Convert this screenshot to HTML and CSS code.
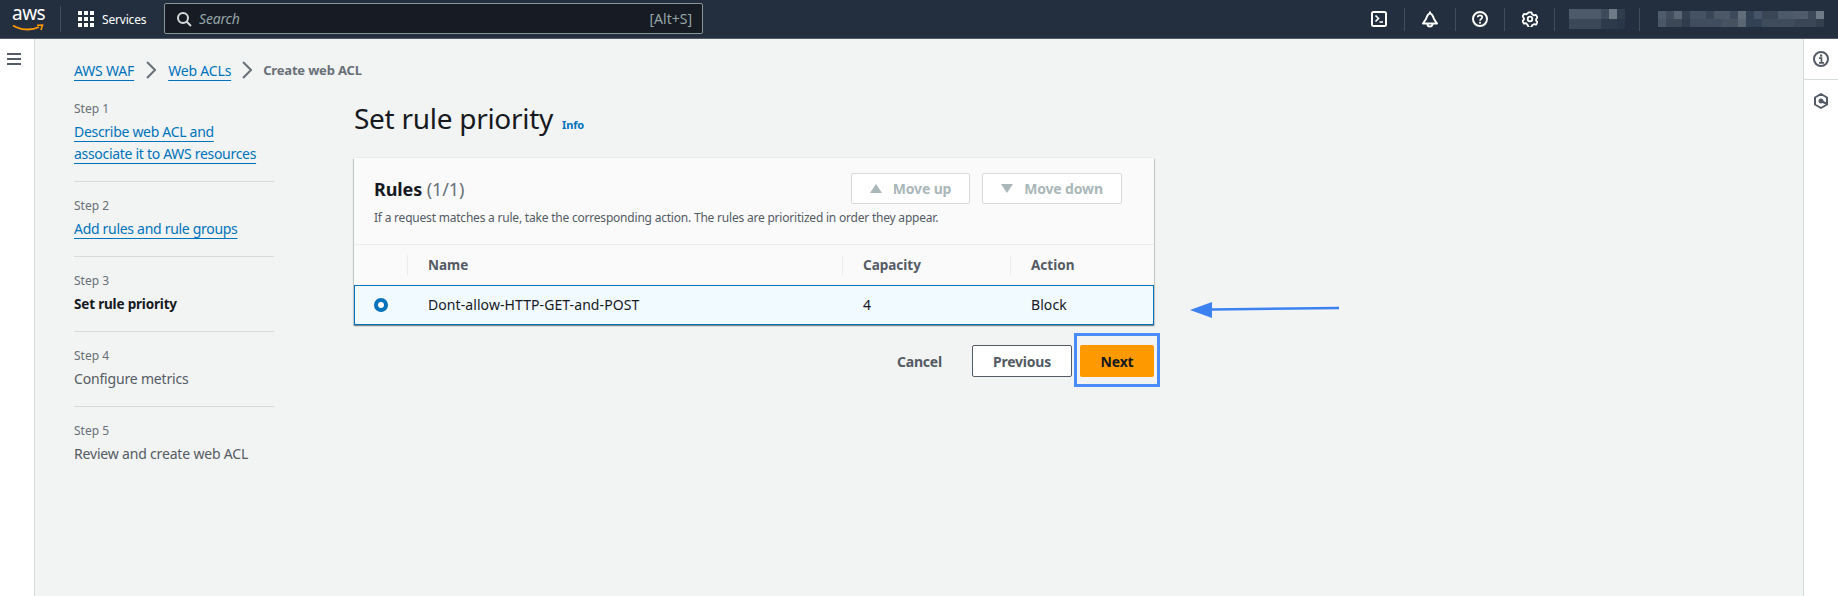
FILE: index.html
```html
<!DOCTYPE html>
<html lang="en">
<head>
    <meta charset="UTF-8">
    <meta name="viewport" content="width=device-width, initial-scale=1.0">
    <title>Set rule priority</title>
    <link rel="stylesheet" href="styles.css">
</head>
<body>
    <!-- Top bar -->
    <header class="topbar">
        <div class="logo">
            <span class="logo-text">aws</span>
            <svg class="logo-smile" viewBox="0 0 32 8" width="32" height="8"><path d="M1 1.500C8 6 19 7 27 3" fill="none" stroke="#f90" stroke-width="1.800"/><path d="M25 1.200L30.500 1 29 6" fill="none" stroke="#f90" stroke-width="1.600"/></svg>
        </div>
        <div class="services">
            <span class="grid-icon"><i></i><i></i><i></i><i></i><i></i><i></i><i></i><i></i><i></i></span>
            <span>Services</span>
        </div>
        <div class="search">
            <svg viewBox="0 0 16 16" width="16" height="16"><circle cx="7" cy="7" r="5" fill="none" stroke="#d5dbdb" stroke-width="2"/><path d="M10.500 10.500L15 15" stroke="#d5dbdb" stroke-width="2"/></svg>
            <span class="search-text">Search</span>
            <span class="search-key">[Alt+S]</span>
        </div>
        <div class="top-icons">
            <span class="top-icon">
                <svg viewBox="0 0 16 16" width="16" height="16"><rect x="1" y="1" width="14" height="14" rx="1.500" fill="none" stroke="#fff" stroke-width="2"/><path d="M4.500 4.500L7.500 7.500 4.500 10.500M8.500 11H12" fill="none" stroke="#fff" stroke-width="1.700"/></svg>
            </span>
            <span class="top-icon">
                <svg viewBox="0 0 16 17" width="16" height="17"><path d="M1 12.500h14L12 8C11 5 10 2.500 8 2.500S5 5 4 8z" fill="none" stroke="#fff" stroke-width="2" stroke-linejoin="round"/><path d="M8 .5v2" stroke="#fff" stroke-width="2"/><path d="M5.500 13a2.500 2.500 0 0 0 5 0" fill="none" stroke="#fff" stroke-width="2"/></svg>
            </span>
            <span class="top-icon">
                <svg viewBox="0 0 16 16" width="16" height="16"><circle cx="8" cy="8" r="7" fill="none" stroke="#fff" stroke-width="2"/><path d="M5.800 6.300C5.800 5 6.800 4.300 8 4.300s2.200 .8 2.200 2C10.200 8 8 8 8 9.800" fill="none" stroke="#fff" stroke-width="1.700"/><rect x="7.100" y="10.800" width="1.800" height="1.800" fill="#fff"/></svg>
            </span>
            <span class="top-icon">
                <svg viewBox="0 0 16 16" width="16" height="16"><path d="M6.500 1h3l.6 2 1.900 1.100 2-.5 1.500 2.600-1.400 1.500v1.600l1.400 1.500-1.500 2.600-2-.5-1.900 1.100-.6 2h-3l-.6-2L4 11.900l-2 .5L.5 9.800l1.400-1.500V6.700L.5 5.200 2 2.600l2 .5 1.900-1.100z" transform="translate(0 .300)" fill="none" stroke="#fff" stroke-width="1.800" stroke-linejoin="round"/><circle cx="8" cy="8" r="2.300" fill="none" stroke="#fff" stroke-width="1.800"/></svg>
            </span>
            <span class="top-icon blur-cell"><span class="mosaic mosaic-short"></span></span>
            <span class="top-icon blur-cell"><span class="mosaic mosaic-long"></span></span>
        </div>
    </header>

    <div class="layout">
        <!-- Left nav -->
        <nav class="side-nav">
            <span class="burger"><i></i><i></i><i></i></span>
        </nav>

        <!-- Content -->
        <main class="content">
            <div class="breadcrumb">
                <a class="link">AWS WAF</a>
                <svg class="crumb-arrow" viewBox="0 0 10 18" width="10" height="18"><path d="M1 1l8 8-8 8" fill="none" stroke="#687078" stroke-width="2"/></svg>
                <a class="link">Web ACLs</a>
                <svg class="crumb-arrow crumb-arrow-last" viewBox="0 0 10 18" width="10" height="18"><path d="M1 1l8 8-8 8" fill="none" stroke="#687078" stroke-width="2"/></svg>
                <span class="crumb-current">Create web ACL</span>
            </div>

            <div class="wizard">
                <ol class="steps">
                    <li class="step">
                        <div class="step-label">Step 1</div>
                        <a class="link step-link">Describe web ACL and<br>associate it to AWS resources</a>
                    </li>
                    <li class="step">
                        <div class="step-label">Step 2</div>
                        <a class="link step-link">Add rules and rule groups</a>
                    </li>
                    <li class="step">
                        <div class="step-label">Step 3</div>
                        <strong class="step-active">Set rule priority</strong>
                    </li>
                    <li class="step">
                        <div class="step-label">Step 4</div>
                        <span class="step-off">Configure metrics</span>
                    </li>
                    <li class="step">
                        <div class="step-label">Step 5</div>
                        <span class="step-off">Review and create web ACL</span>
                    </li>
                </ol>

                <section class="main-col">
                    <div class="title-row">
                        <h1>Set rule priority</h1>
                        <a class="info">Info</a>
                    </div>

                    <div class="card">
                        <div class="card-head">
                            <div class="card-title-row">
                                <h2>Rules <span class="count">(1/1)</span></h2>
                                <div class="move-btns">
                                    <span class="btn-off btn-up"><i class="tri-up"></i>Move up</span>
                                    <span class="btn-off btn-down"><i class="tri-down"></i>Move down</span>
                                </div>
                            </div>
                            <p class="card-desc">If a request matches a rule, take the corresponding action. The rules are prioritized in order they appear.</p>
                        </div>
                        <div class="row row-head">
                            <div></div>
                            <div class="th">Name</div>
                            <div class="th">Capacity</div>
                            <div class="th">Action</div>
                        </div>
                        <div class="row row-selected">
                            <div class="radio-cell"><span class="radio"></span></div>
                            <div class="td">Dont-allow-HTTP-GET-and-POST</div>
                            <div class="td">4</div>
                            <div class="td">Block</div>
                        </div>
                    </div>

                    <div class="actions">
                        <span class="btn-cancel">Cancel</span>
                        <span class="btn-prev">Previous</span>
                        <span class="btn-next">Next<span class="highlight"></span></span>
                    </div>
                </section>
            </div>
        </main>

        <!-- Right rail -->
        <aside class="rail">
            <div class="rail-item">
                <svg viewBox="0 0 16 16" width="16" height="16"><circle cx="8" cy="8" r="7" fill="none" stroke="#545b64" stroke-width="2"/><rect x="7" y="3.500" width="2.200" height="2.200" fill="#545b64"/><path d="M6 7.200h2.500v4.300M6 11.800h5" fill="none" stroke="#545b64" stroke-width="1.700"/></svg>
            </div>
            <div class="rail-item">
                <svg viewBox="0 0 16 16" width="16" height="16"><path d="M8 1l6 3.500v7L8 15l-6-3.500v-7z" fill="none" stroke="#545b64" stroke-width="2" stroke-linejoin="round"/><circle cx="8" cy="8" r="2.500" fill="#545b64"/><path d="M8 8l6 3" stroke="#545b64" stroke-width="2"/></svg>
            </div>
        </aside>
    </div>

    <!-- Annotation arrow -->
    <svg class="note-arrow" viewBox="0 0 152 20" width="152" height="20"><path d="M22 10.500L150 9" stroke="#3b82f0" stroke-width="2.500"/><path d="M1 11L23 3v16z" fill="#3b82f0"/></svg>
</body>
</html>
```

FILE: styles.css
```css
* {
    box-sizing: border-box;
}
html, body {
    margin: 0;
    height: 100%;
    overflow: hidden;
}
body {
    font-family: "Noto Sans", "Open Sans", sans-serif;
    font-size: 14px;
    letter-spacing: -0.18px;
    color: #16191f;
    background: #fff;
    display: flex;
    flex-direction: column;
}

/* Top bar */
.topbar {
    height: 39px;
    flex: none;
    background: #232f3e;
    border-bottom: 1px solid #545b64;
    display: flex;
    align-items: center;
    color: #fff;
}
.logo {
    width: 61px;
    height: 26px;
    padding-left: 12px;
    border-right: 1px solid #414d5c;
    position: relative;
}
.logo-text {
    display: block;
    font-size: 19px;
    line-height: 19px;
    letter-spacing: -0.5px;
    margin-top: -2px;
}
.logo-smile {
    position: absolute;
    left: 12px;
    top: 18px;
}
.services {
    display: flex;
    align-items: center;
    gap: 8px;
    padding-left: 17px;
    width: 103px;
    font-size: 12px;
}
.grid-icon {
    display: grid;
    grid-template-columns: repeat(3, 4px);
    gap: 2px;
}
.grid-icon i {
    width: 4px;
    height: 4px;
    background: #fff;
}
.search {
    width: 539px;
    height: 31px;
    margin-top: -1px;
    background: #161b24;
    border: 1px solid #879596;
    border-radius: 2px;
    display: flex;
    align-items: center;
    padding: 0 10px 0 11px;
    color: #95a5a6;
    font-size: 14px;
}
.search-text {
    font-style: italic;
    margin-left: 7px;
    flex: 1;
}
.search-key {
    letter-spacing: 0;
}
.top-icons {
    margin-left: auto;
    display: flex;
    align-items: center;
    padding-right: 14px;
}
.top-icon {
    width: 50px;
    height: 23px;
    display: flex;
    align-items: center;
    justify-content: center;
    border-right: 1px solid #414d5c;
}
.top-icon:nth-child(1) {
    width: 51px;
    border-right-color: #414d5c;
}
.top-icon:nth-child(2) {
    width: 51px;
}
.top-icon:nth-child(3) {
    width: 49px;
}
.top-icon.blur-cell:nth-child(5) {
    width: 85px;
}
.top-icon.blur-cell:last-child {
    width: auto;
    border-right: 0;
    padding-left: 18px;
}
.mosaic {
    display: block;
    background-repeat: no-repeat;
}
.mosaic-short {
    width: 56px;
    height: 20px;
    background:
        linear-gradient(90deg, #4c5a69 0 32px, #3d4a5a 32px 40px, #6f7a87 40px 48px, #2f3d4d 48px) top / 100% 10px no-repeat,
        linear-gradient(90deg, #3b4857 0 32px, #2d3a4b 32px 48px, #283647 48px) bottom / 100% 10px no-repeat;
}
.mosaic-long {
    width: 166px;
    height: 16px;
    background:
        linear-gradient(90deg, #4e5c6b 0 8px, #414c5c 8px 16px, #5a6673 16px 24px, #343f50 24px 32px, #445263 32px 48px, #394656 48px 56px, #4d5866 56px 72px, #3c4a5b 72px 80px, #626d7a 80px 88px, #334155 88px 96px, #46546a 96px 104px, #3a4656 104px 120px, #4c5a69 120px 136px, #505c6a 136px 150px, #3d4858 150px 158px, #6f7a87 158px) top / 100% 8px no-repeat,
        linear-gradient(90deg, #4a5866 0 8px, #3d4856 8px 24px, #313d4d 24px 32px, #3f4d5e 32px 64px, #475260 64px 80px, #5c6673 80px 88px, #334155 88px 104px, #3f4c5c 104px 136px, #3a4655 136px 158px, #343f4e 158px) bottom / 100% 8px no-repeat;
}

/* Page structure */
.layout {
    flex: 1;
    display: flex;
    min-height: 0;
}
.side-nav {
    width: 35px;
    flex: none;
    background: #fff;
    border-right: 1px solid #d5dbdb;
    padding: 14px 0 0 7px;
}
.burger {
    display: flex;
    flex-direction: column;
    gap: 3px;
    width: 14px;
}
.burger i {
    display: block;
    height: 2px;
    background: #545b64;
}
.content {
    flex: 1;
    background: #f2f3f3;
    padding: 21px 0 0 39px;
}
.rail {
    width: 35px;
    flex: none;
    background: #fff;
    border-left: 1px solid #d5dbdb;
}
.rail-item {
    height: 41px;
    padding-top: 12px;
    display: flex;
    justify-content: center;
    align-items: flex-start;
}
.rail-item:first-child {
    border-bottom: 1px solid #d5dbdb;
}
.rail-item:last-child {
    padding-top: 13px;
}

/* Breadcrumb */
.link {
    color: #0073bb;
    text-decoration: underline;
    text-decoration-thickness: 1px;
    text-underline-offset: 4px;
}
.breadcrumb {
    display: flex;
    align-items: center;
    height: 20px;
    font-size: 14px;
}
.crumb-arrow {
    margin: 0 12px;
}
.crumb-arrow-last {
    margin: 0 11px;
}
.crumb-current {
    color: #687078;
    font-weight: 700;
    font-size: 13px;
}

/* Steps */
.wizard {
    display: flex;
    gap: 80px;
    margin-top: 5px;
}
.steps {
    list-style: none;
    margin: 0;
    padding: 0;
    width: 200px;
    flex: none;
    line-height: 22px;
}
.step {
    padding: 15px 0 16px;
    border-bottom: 1px solid #d5dbdb;
}
.step:last-child {
    border-bottom: 0;
}
.step-label {
    font-size: 12px;
    line-height: 18px;
    margin-bottom: 3px;
    color: #687078;
    letter-spacing: 0;
}
.step-link {
    letter-spacing: -0.3px;
}
.step-active {
    font-size: 13.500px;
    color: #16191f;
    font-weight: 700;
}
.step-off {
    color: #545b64;
}

/* Main column */
.main-col {
    width: 800px;
    padding-top: 15px;
}
.title-row {
    display: flex;
    align-items: baseline;
    gap: 9px;
    height: 36px;
}
h1 {
    margin: 0;
    font-size: 28px;
    line-height: 36px;
    font-weight: 400;
    letter-spacing: -0.28px;
}
.info {
    font-size: 11px;
    font-weight: 700;
    color: #0073bb;
}
.card {
    margin-top: 22px;
    background: #fafafa;
    box-shadow: 0 -1px 0 0 #eaeded, 0 1px 1px 0 rgba(0, 28, 36, 0.3), 1px 1px 1px 0 rgba(0, 28, 36, 0.15), -1px 1px 1px 0 rgba(0, 28, 36, 0.15);
}
.card-head {
    height: 87px;
    padding: 15px 32px 0 20px;
    border-bottom: 1px solid #eaeded;
}
.card-title-row {
    display: flex;
    align-items: center;
    justify-content: space-between;
    height: 31px;
}
h2 {
    margin: 0;
    font-size: 18px;
    line-height: 22px;
    font-weight: 700;
    letter-spacing: -0.1px;
}
.count {
    font-weight: 400;
    color: #687078;
}
.card-desc {
    margin: 5px 0 0;
    font-size: 12px;
    line-height: 18px;
    color: #545b64;
    letter-spacing: -0.21px;
}
.move-btns {
    display: flex;
    gap: 12px;
}
.btn-off {
    height: 31px;
    display: flex;
    align-items: center;
    justify-content: center;
    gap: 11px;
    background: #fff;
    border: 1px solid #d5dbdb;
    border-radius: 2px;
    color: #aab7b8;
    font-weight: 700;
    font-size: 14px;
    letter-spacing: -0.15px;
}
.btn-up {
    width: 119px;
}
.btn-down {
    width: 140px;
}
.tri-up, .tri-down {
    width: 0;
    height: 0;
    border-left: 6px solid transparent;
    border-right: 6px solid transparent;
}
.tri-up {
    border-bottom: 9px solid #aab7b8;
}
.tri-down {
    border-top: 9px solid #aab7b8;
}

/* Rows */
.row {
    display: grid;
    grid-template-columns: 53px 435px 168px 1fr;
    height: 40px;
    align-items: center;
}
.th {
    height: 20px;
    line-height: 20px;
    padding-left: 20px;
    border-left: 1px solid #eaeded;
    font-size: 13.500px;
    font-weight: 700;
    color: #545b64;
    letter-spacing: 0;
}
.td {
    padding: 0 0 2px 21px;
    font-size: 14px;
    letter-spacing: 0.08px;
}
.row-selected {
    background: #f1faff;
    box-shadow: inset 0 0 0 1px #0073bb;
}
.radio-cell {
    padding-left: 20px;
    display: flex;
}
.radio {
    width: 14px;
    height: 14px;
    border-radius: 50%;
    border: 4px solid #0073bb;
    background: #fff;
}

/* Footer buttons */
.actions {
    display: flex;
    justify-content: flex-end;
    align-items: center;
    gap: 8px;
    margin-top: 20px;
    font-weight: 700;
    font-size: 14px;
    letter-spacing: -0.2px;
}
.btn-cancel {
    color: #545b64;
    margin-right: 22px;
}
.btn-prev, .btn-next {
    height: 32px;
    display: flex;
    align-items: center;
    justify-content: center;
    border-radius: 2px;
}
.btn-prev {
    width: 100px;
    background: #fff;
    border: 1px solid #545b64;
    color: #545b64;
}
.btn-next {
    width: 74px;
    background: #ff9900;
    color: #16191f;
    position: relative;
}
.highlight {
    position: absolute;
    top: -12px;
    bottom: -10px;
    left: -6px;
    right: -6px;
    border: 3.500px solid #4a8cf7;
}

/* Arrow on top of the page */
.note-arrow {
    position: absolute;
    left: 1189px;
    top: 299px;
}
```
